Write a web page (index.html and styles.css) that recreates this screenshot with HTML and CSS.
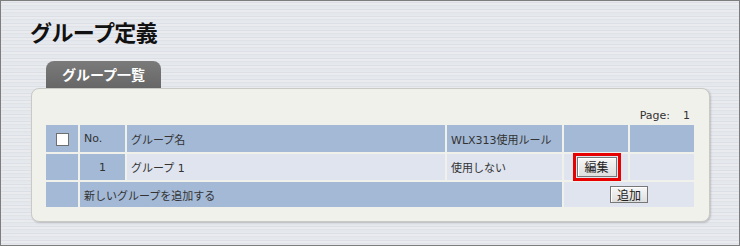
FILE: index.html
```html
<!DOCTYPE html>
<html lang="ja">
<head>
<meta charset="utf-8">
<title>グループ定義</title>
<link rel="stylesheet" href="styles.css">
</head>
<body>
<div class="frame">
  <h1 class="title">グループ定義</h1>
  <div class="tab">グループ一覧</div>
  <div class="panel">
    <div class="page"><span>Page:</span><span class="page-num">1</span></div>
    <table class="grid">
      <tr class="row-head">
        <td class="c-chk blue"><span class="chk"></span></td>
        <td class="c-no blue">No.</td>
        <td class="c-name blue">グループ名</td>
        <td class="c-rule blue">WLX313使用ルール</td>
        <td class="c-act blue"></td>
        <td class="c-last blue"></td>
      </tr>
      <tr class="row-item">
        <td class="blue"></td>
        <td class="blue num">1</td>
        <td class="light">グループ 1</td>
        <td class="light">使用しない</td>
        <td class="light center"><button class="btn btn-edit">編集</button></td>
        <td class="light"></td>
      </tr>
      <tr class="row-add">
        <td class="blue"></td>
        <td class="blue" colspan="3">新しいグループを追加する</td>
        <td class="light center" colspan="2"><button class="btn btn-add">追加</button></td>
      </tr>
    </table>
  </div>
</div>
</body>
</html>
```

FILE: styles.css
```css
html, body {
  margin: 0;
  padding: 0;
}

body {
  font-family: "DejaVu Sans", "Noto Sans CJK JP", sans-serif;
}

.frame {
  width: 740px;
  height: 246px;
  box-sizing: border-box;
  border: 1px solid #7d7d7d;
  overflow: hidden;
  background-color: #e3e6eb;
  background-image: repeating-linear-gradient(
    to bottom,
    #e6e9ee 0px,
    #e6e9ee 1px,
    #dcdfe5 1px,
    #dcdfe5 2px,
    #e9ebef 2px,
    #e9ebef 4px,
    #dfe2e7 4px,
    #dfe2e7 5px,
    #e4e7ec 5px,
    #e4e7ec 7px
  );
}

.title {
  margin: 18px 0 0 29px;
  height: 24px;
  line-height: 24px;
  font-family: "Noto Sans CJK JP", sans-serif;
  font-size: 22px;
  font-weight: bold;
  color: #111;
  letter-spacing: -0.6px;
}

.tab {
  margin: 18px 0 0 45px;
  width: 115px;
  height: 27px;
  line-height: 27px;
  box-sizing: border-box;
  background: linear-gradient(to bottom, #7a7a7a, #676767);
  border-radius: 8px 8px 0 0;
  color: #fff;
  font-family: "Noto Sans CJK JP", sans-serif;
  font-size: 14px;
  font-weight: bold;
  text-align: center;
}

.panel {
  margin-left: 30px;
  width: 679px;
  height: 134px;
  box-sizing: border-box;
  background: #f1f1ec;
  border: 1px solid #c9c9c6;
  border-radius: 8px;
  box-shadow: 1px 1px 2px rgba(0, 0, 0, 0.18);
  padding: 19px 0 0 12px;
}

.page {
  height: 15px;
  line-height: 15px;
  font-size: 11px;
  color: #333;
  padding-right: 19px;
  display: flex;
  justify-content: flex-end;
  gap: 13px;
}

.grid {
  border-collapse: separate;
  border-spacing: 2px;
  font-size: 11px;
  color: #333;
  table-layout: fixed;
}

.grid td {
  padding: 0 0 0 4px;
  white-space: nowrap;
  vertical-align: middle;
}

.c-chk { width: 28px; }
.c-no { width: 41px; }
.c-name { width: 314px; }
.c-rule { width: 111px; }
.c-act { width: 60px; }
.c-last { width: 60px; }

.row-head td { height: 27px; }
.row-item td { height: 26px; }
.row-add td { height: 25px; }

.blue { background: #a3b9d6; }
.light { background: #dfe4ee; }

.grid td.num {
  text-align: center;
  padding-left: 0;
}

.grid td.center {
  text-align: center;
  padding-left: 0;
}

.chk {
  display: inline-block;
  width: 11px;
  height: 11px;
  margin-left: 6px;
  margin-top: 2px;
  background: #fff;
  border: 1px solid #6f6f6f;
  vertical-align: middle;
}

.btn {
  font-family: "Noto Sans CJK JP", sans-serif;
  font-size: 12px;
  color: #222;
  background: linear-gradient(to bottom, #f7f7f7, #dedede);
  border: 1px solid #777;
  box-shadow: inset 1px 1px 0 #fff;
  padding: 0;
  margin: 0;
  cursor: pointer;
  vertical-align: middle;
}

.btn-edit {
  width: 40px;
  height: 20px;
  line-height: 18px;
  outline: 3px solid #e60000;
  outline-offset: 1px;
  margin-left: 1px;
}

.btn-add {
  width: 38px;
  height: 17px;
  line-height: 15px;
}
```
